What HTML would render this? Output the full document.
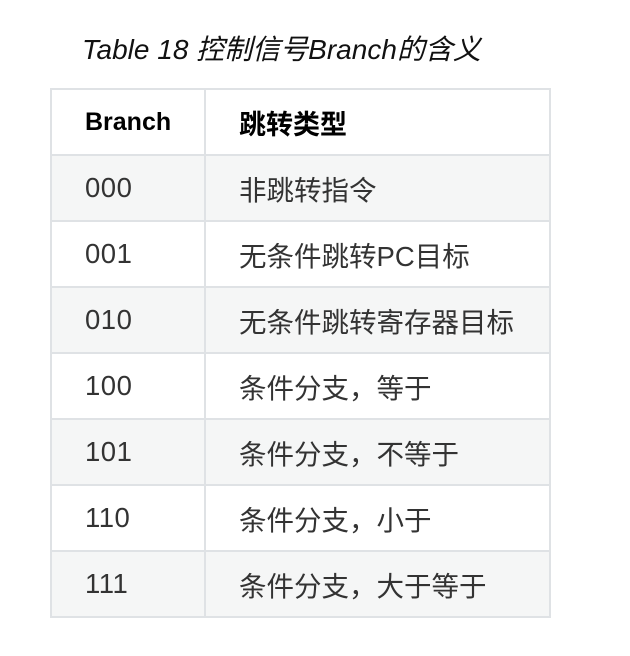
<!DOCTYPE html>
<html><head><meta charset="utf-8"><style>
body{margin:0;background:#fff;width:630px;height:656px;position:relative;overflow:hidden;font-family:"Liberation Sans","Noto Sans CJK SC",sans-serif;}
.cap{position:absolute;left:82px;top:28px;font-size:28px;font-style:italic;color:#111;white-space:nowrap;}
table{position:absolute;left:50px;top:88px;border-collapse:collapse;}
td,th{border:2px solid #dfe2e5;height:62px;padding:0 0 0 33px;text-align:left;font-size:27.5px;color:#333;box-sizing:border-box;}
td:first-child{letter-spacing:0.5px;}
th{color:#000;font-weight:bold;font-size:25px;}
th span{font-size:27px;}
td:first-child,th:first-child{width:154px;}
td:last-child,th:last-child{width:345px;}
tr{height:66px;}
tbody tr:nth-child(odd){background:#f5f6f6;}
</style></head><body>
<div class="cap">Table 18 控制信号Branch的含义</div>
<table>
<thead><tr><th>Branch</th><th><span>跳转类型</span></th></tr></thead>
<tbody>
<tr><td>000</td><td>非跳转指令</td></tr>
<tr><td>001</td><td>无条件跳转PC目标</td></tr>
<tr><td>010</td><td>无条件跳转寄存器目标</td></tr>
<tr><td>100</td><td>条件分支，等于</td></tr>
<tr><td>101</td><td>条件分支，不等于</td></tr>
<tr><td>110</td><td>条件分支，小于</td></tr>
<tr><td>111</td><td>条件分支，大于等于</td></tr>
</tbody></table>
</body></html>
